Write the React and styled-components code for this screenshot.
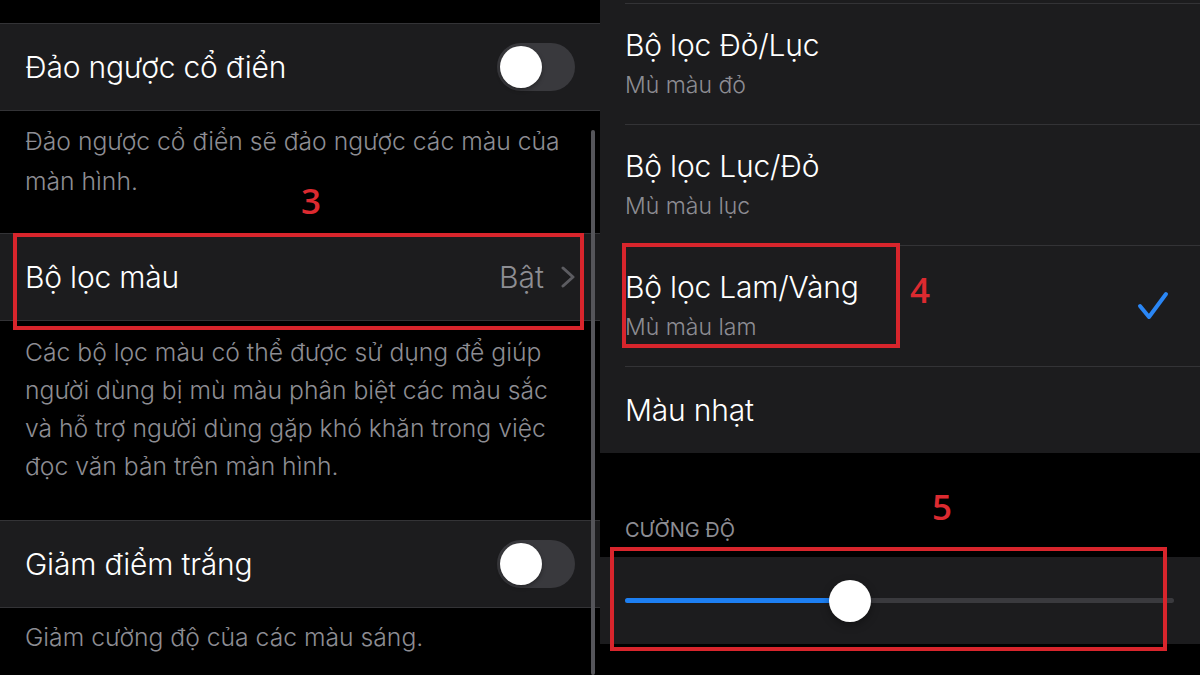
import React from 'react';
import styled, { createGlobalStyle } from 'styled-components';

const GlobalStyle = createGlobalStyle`
  html, body {
    margin: 0;
    padding: 0;
    background: #000;
  }
  body {
    font-family: Inter, "Noto Sans", "DejaVu Sans", sans-serif;
    -webkit-font-smoothing: antialiased;
  }
`;

const Screen = styled.div`
  display: flex;
  width: 1200px;
  height: 675px;
  overflow: hidden;
  background: #000;
`;

const Pane = styled.div`
  position: relative;
  display: flex;
  flex-direction: column;
  width: ${({ width }) => (width ? `${width}px` : 'auto')};
  flex: ${({ width }) => (width ? 'none' : '1')};
`;

const ScrollBar = styled.div`
  position: absolute;
  right: 5px;
  top: 130px;
  bottom: 0;
  width: 4px;
  border-radius: 2px;
  background: #55555a;
`;

const Spacer = styled.div`
  height: ${({ h }) => h}px;
  flex: none;
`;

const Group = styled.div`
  background: #1c1c1e;
  border-top: 1px solid ${({ edge }) => (edge ? '#333336' : 'transparent')};
  border-bottom: 1px solid ${({ edge }) => (edge ? '#333336' : 'transparent')};
  padding-top: ${({ peek }) => peek || 0}px;
`;

const Row = styled.div`
  position: relative;
  display: flex;
  align-items: center;
  justify-content: space-between;
  min-height: ${({ tall }) => (tall ? 120 : 86)}px;
  padding: ${({ tall }) => (tall ? '23px 25px' : '0 25px')};
  box-sizing: border-box;
`;

const InsetRow = styled(Row)`
  margin-left: 25px;
  padding-left: 0;
  border-top: 1px solid #333336;
`;

const Titles = styled.div`
  display: flex;
  flex-direction: column;
  gap: 6px;
`;

const Title = styled.div`
  color: #fff;
  font-size: 30px;
  font-weight: 350;
  line-height: 36px;
  letter-spacing: -0.2px;
`;

const Subtitle = styled.div`
  color: #8d8d93;
  font-size: 23px;
  font-weight: 350;
  line-height: 32px;
`;

const Footer = styled.div`
  color: #8d8d93;
  font-size: 24.7px;
  font-weight: 350;
  line-height: ${({ lh }) => lh || 38}px;
  padding: ${({ pt }) => pt}px 25px 0;
  position: relative;
  white-space: nowrap;
`;

const SectionLabel = styled.div`
  color: #8d8d93;
  font-size: 20px;
  line-height: 30px;
  padding: 62px 25px 12px;
  text-transform: uppercase;
  position: relative;
`;

const Toggle = styled.div`
  position: relative;
  width: 78px;
  height: 48px;
  border-radius: 24px;
  background: #39393d;
  flex: none;

  &::after {
    content: '';
    position: absolute;
    left: 3px;
    top: 3px;
    width: 42px;
    height: 42px;
    border-radius: 50%;
    background: #fff;
    box-shadow: 0 2px 4px rgba(0, 0, 0, 0.35);
  }
`;

const Value = styled.div`
  display: flex;
  align-items: center;
  gap: 17px;
  color: #8e8e93;
  font-size: 30px;
  font-weight: 350;
  line-height: 36px;
`;

const Annotation = styled.div`
  position: absolute;
  left: ${({ x }) => x}px;
  top: ${({ y }) => y}px;
  color: #dc2a30;
  font-family: "Open Sans", "Noto Sans", sans-serif;
  font-weight: 600;
  font-size: 35px;
  line-height: 1;
`;

const RedBox = styled.div`
  position: absolute;
  left: ${({ x }) => x}px;
  top: ${({ y }) => y}px;
  width: ${({ w }) => w}px;
  height: ${({ h }) => h}px;
  border: 4px solid #d8252c;
  box-sizing: border-box;
  pointer-events: none;
`;

const SliderRow = styled.div`
  position: relative;
  display: flex;
  align-items: center;
  height: 87px;
  padding: 0 26px 0 25px;
  background: #1c1c1e;
`;

const Track = styled.div`
  position: relative;
  flex: 1;
  height: 5px;
  border-radius: 3px;
  background: #3a3a3e;
`;

const Fill = styled.div`
  position: absolute;
  left: 0;
  top: 0;
  bottom: 0;
  border-radius: 3px;
  background: #1d7ff2;
`;

const Knob = styled.div`
  position: absolute;
  top: 50%;
  width: 42px;
  height: 42px;
  margin: -21px 0 0 -21px;
  border-radius: 50%;
  background: #fff;
  box-shadow: 0 3px 8px rgba(0, 0, 0, 0.35);
`;

const Chevron = () => (
  <svg width="14" height="22" viewBox="0 0 14 22">
    <polyline
      points="2,2 12,11 2,20"
      fill="none"
      stroke="#5c5c61"
      strokeWidth="3"
      strokeLinecap="round"
      strokeLinejoin="round"
    />
  </svg>
);

const Check = () => (
  <svg width="32" height="30" viewBox="0 0 32 30" style={{ marginRight: 6 }}>
    <polyline
      points="3,15 12,26 29,3"
      fill="none"
      stroke="#2a86f5"
      strokeWidth="4"
      strokeLinecap="round"
      strokeLinejoin="round"
    />
  </svg>
);

const Lines = ({ lines }) =>
  lines.map((l) => <div key={l}>{l}</div>);

const filters = [
  { title: 'Bộ lọc Đỏ/Lục', sub: 'Mù màu đỏ' },
  { title: 'Bộ lọc Lục/Đỏ', sub: 'Mù màu lục' },
  { title: 'Bộ lọc Lam/Vàng', sub: 'Mù màu lam', checked: true, mark: true },
  { title: 'Màu nhạt' },
];

const intensity = 0.41;

export default function App() {
  return (
    <>
      <GlobalStyle />
      <Screen>
        <Pane width={600}>
          <Spacer h={23} />
          <Group edge>
            <Row>
              <Title>Đảo ngược cổ điển</Title>
              <Toggle />
            </Row>
          </Group>
          <Footer pt={10} lh={40}>
            <Lines
              lines={['Đảo ngược cổ điển sẽ đảo ngược các màu của', 'màn hình.']}
            />
            <Annotation x={301} y={72}>3</Annotation>
          </Footer>
          <Spacer h={32} />
          <Group edge>
            <Row>
              <Title>Bộ lọc màu</Title>
              <Value>
                Bật
                <Chevron />
              </Value>
              <RedBox x={13} y={-1} w={571} h={97} />
            </Row>
          </Group>
          <Footer pt={12}>
            <Lines
              lines={[
                'Các bộ lọc màu có thể được sử dụng để giúp',
                'người dùng bị mù màu phân biệt các màu sắc',
                'và hỗ trợ người dùng gặp khó khăn trong việc',
                'đọc văn bản trên màn hình.',
              ]}
            />
          </Footer>
          <Spacer h={35} />
          <Group edge>
            <Row>
              <Title>Giảm điểm trắng</Title>
              <Toggle />
            </Row>
          </Group>
          <Footer pt={10}>Giảm cường độ của các màu sáng.</Footer>
          <ScrollBar />
        </Pane>

        <Pane>
          <Group peek={2}>
            {filters.map((f) => (
              <InsetRow key={f.title} tall={!!f.sub}>
                <Titles>
                  <Title>{f.title}</Title>
                  {f.sub && <Subtitle>{f.sub}</Subtitle>}
                </Titles>
                {f.checked && <Check />}
                {f.mark && (
                  <>
                    <RedBox x={-3} y={-3} w={278} h={105} />
                    <Annotation x={285} y={26}>4</Annotation>
                  </>
                )}
              </InsetRow>
            ))}
          </Group>
          <SectionLabel>
            Cường độ
            <Annotation x={332} y={36}>5</Annotation>
          </SectionLabel>
          <SliderRow>
            <Track>
              <Fill style={{ width: `${intensity * 100}%` }} />
              <Knob style={{ left: `${intensity * 100}%` }} />
            </Track>
            <RedBox x={10} y={-10} w={557} h={104} />
          </SliderRow>
        </Pane>
      </Screen>
    </>
  );
}
